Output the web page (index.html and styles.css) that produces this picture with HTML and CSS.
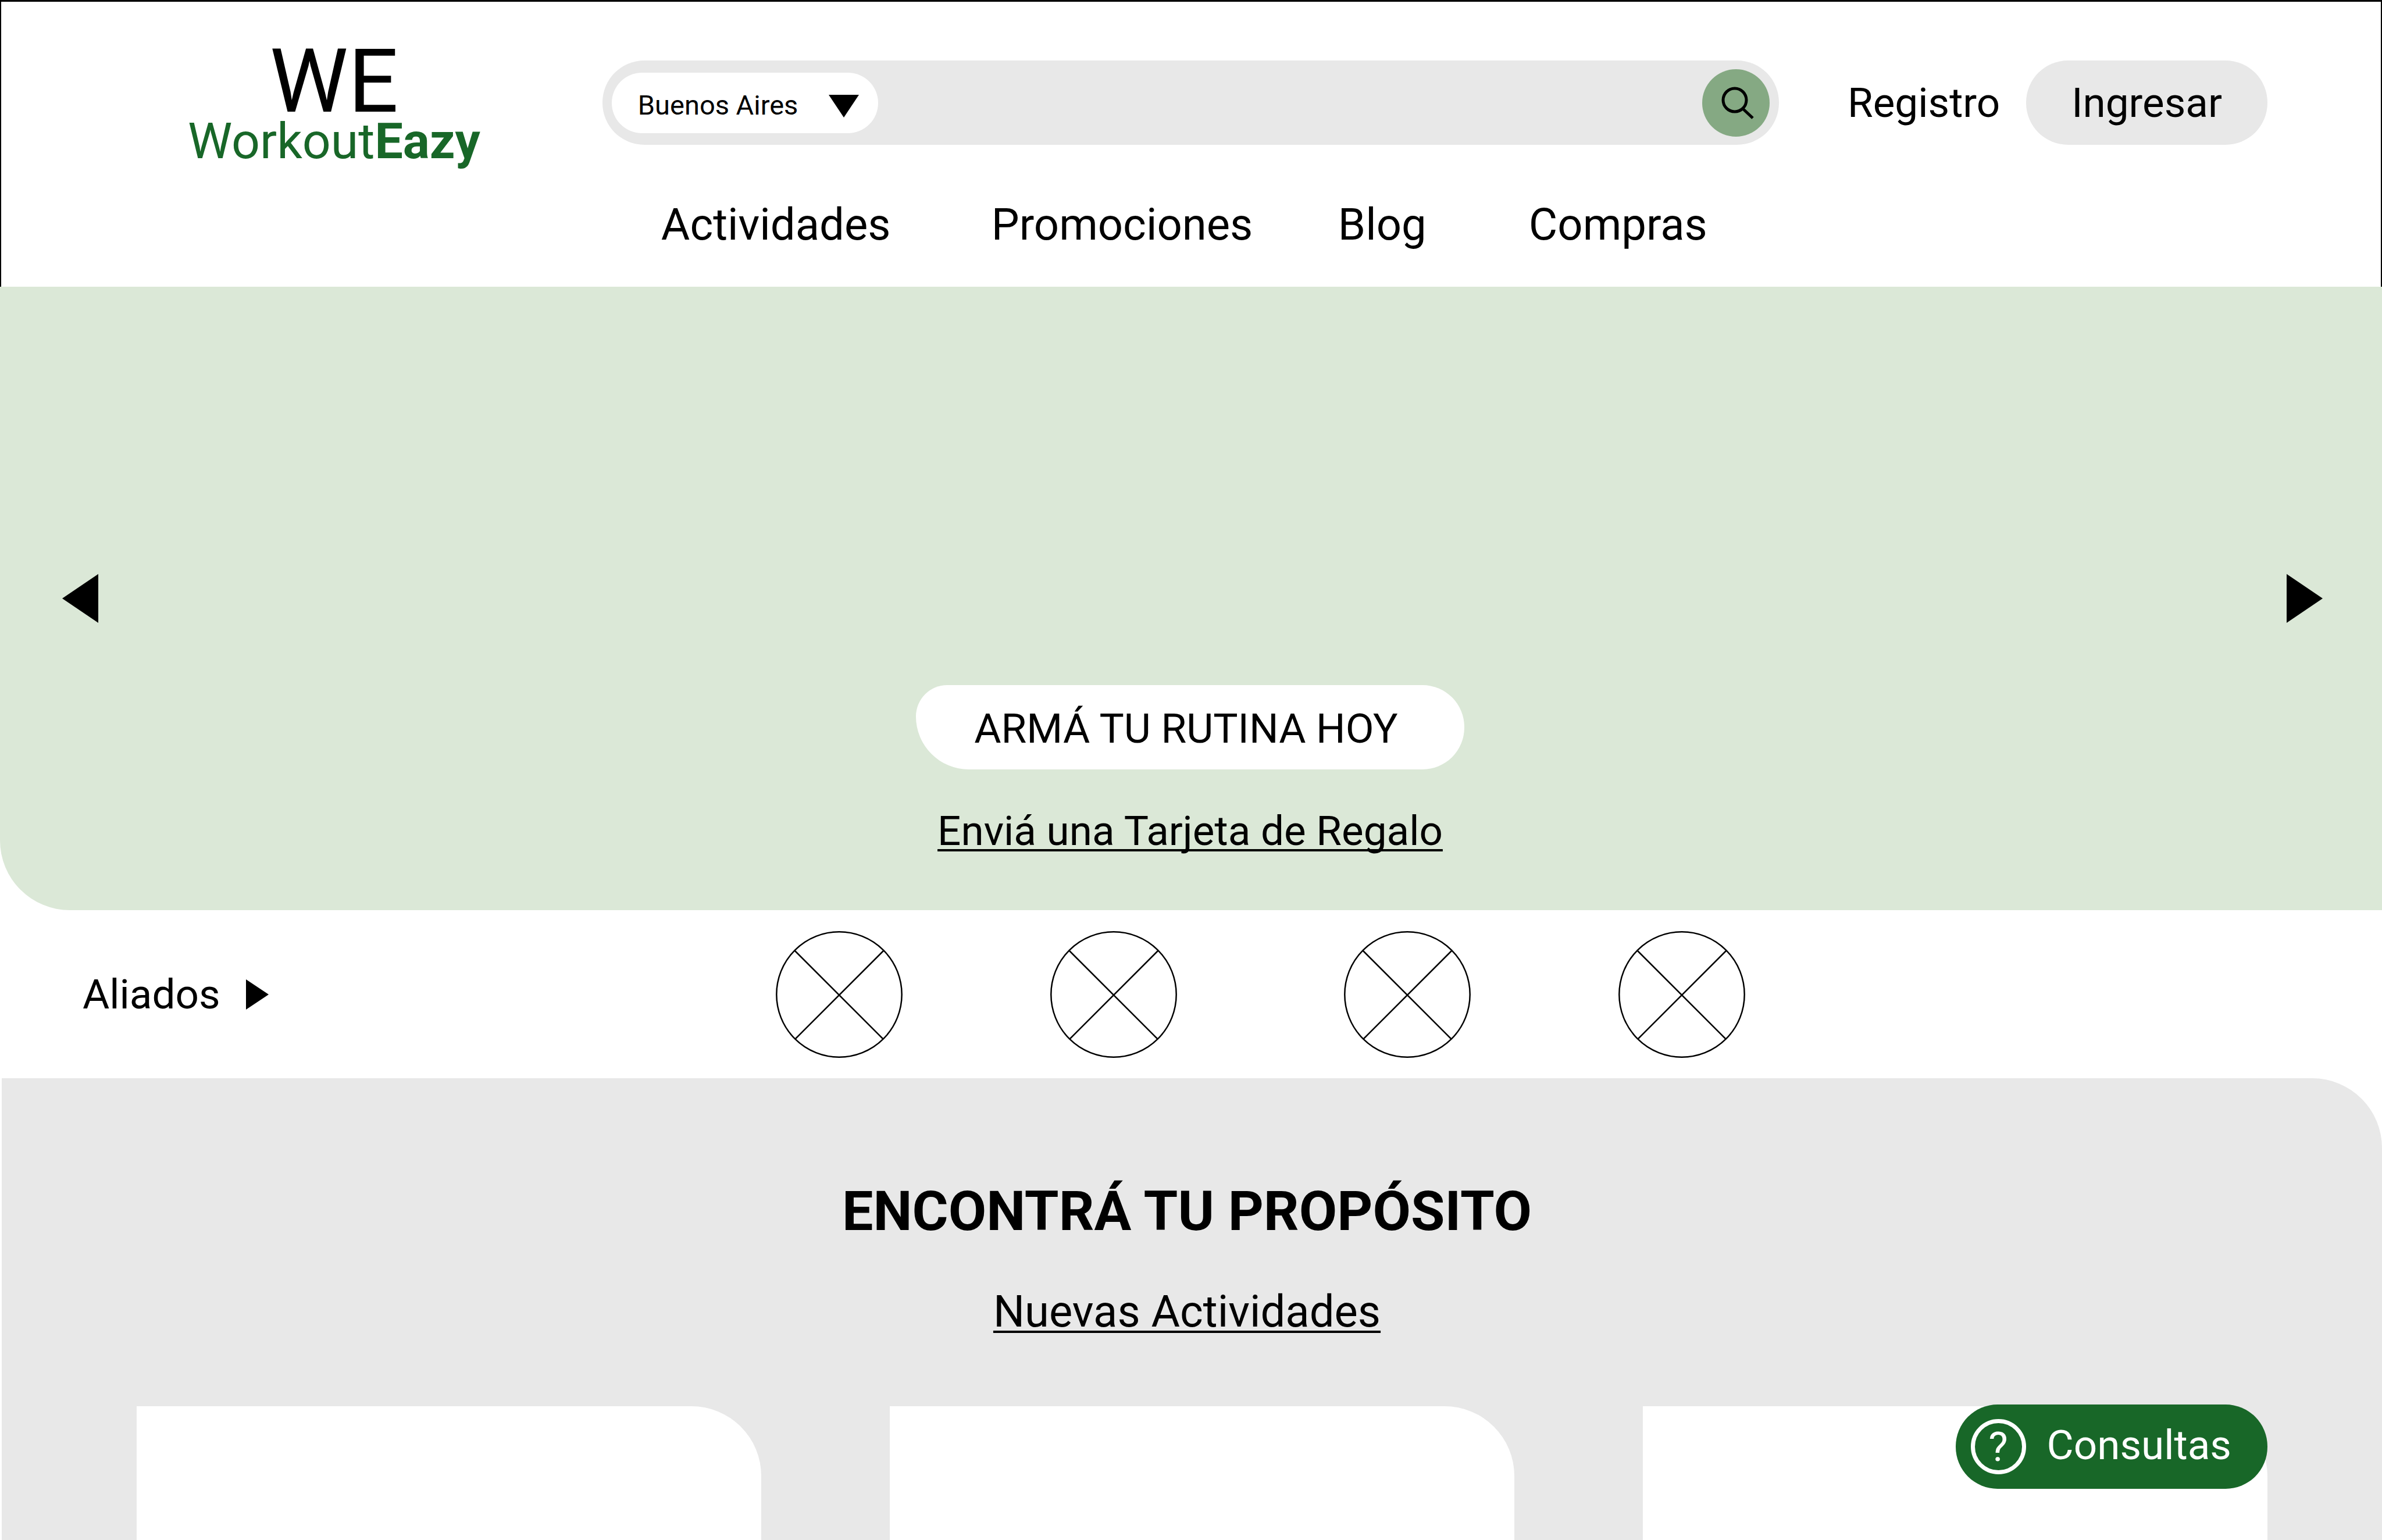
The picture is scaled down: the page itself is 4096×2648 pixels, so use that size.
FILE: index.html
```html
<!DOCTYPE html>
<html lang="es">
<head>
<meta charset="utf-8">
<meta name="viewport" content="width=device-width, initial-scale=1">
<title>WorkoutEazy</title>
<link rel="stylesheet" href="styles.css">
</head>
<body>
<header class="site-header">
  <a class="logo" href="#">
    <span class="logo-mark">WE</span>
    <span class="logo-name">Workout<strong>Eazy</strong></span>
  </a>
  <div class="header-main">
    <div class="header-top">
      <form class="search" role="search">
        <div class="location">
          <select class="location-select" aria-label="Ciudad">
            <option>Buenos Aires</option>
          </select>
          <svg class="location-arrow" viewBox="0 0 52 39" aria-hidden="true"><path d="M0 0h52L26 39z"/></svg>
        </div>
        <input class="search-input" type="search" aria-label="Buscar">
        <button class="search-button" type="submit" aria-label="Buscar">
          <svg class="search-icon" viewBox="0 0 116 116" aria-hidden="true">
            <circle cx="56" cy="53" r="20"/>
            <path d="M70 68l17 16"/>
          </svg>
        </button>
      </form>
      <a class="register" href="#">Registro</a>
      <button class="login" type="button">Ingresar</button>
    </div>
    <nav class="nav">
      <a href="#">Actividades</a>
      <a href="#">Promociones</a>
      <a href="#">Blog</a>
      <a href="#">Compras</a>
    </nav>
  </div>
</header>
<main class="content">
  <section class="hero">
    <button class="arrow" type="button" aria-label="Anterior">
      <svg class="arrow-icon" viewBox="0 0 62 84" aria-hidden="true"><path d="M62 0v84L0 42z"/></svg>
    </button>
    <div class="hero-actions">
      <button class="hero-button" type="button">ARMÁ TU RUTINA HOY</button>
      <a class="hero-link" href="#">Enviá una Tarjeta de Regalo</a>
    </div>
    <button class="arrow" type="button" aria-label="Siguiente">
      <svg class="arrow-icon" viewBox="0 0 62 84" aria-hidden="true"><path d="M0 0v84l62-42z"/></svg>
    </button>
  </section>
  <section class="allies">
    <a class="allies-title" href="#">
      Aliados
      <svg class="allies-arrow" viewBox="0 0 39 52" aria-hidden="true"><path d="M0 0v52l39-26z"/></svg>
    </a>
    <ul class="allies-list">
      <li><svg class="ally" viewBox="0 0 218 218" aria-hidden="true"><circle cx="109" cy="109" r="107.7"/><path d="M32 33L185 186M186 33L33 186"/></svg></li>
      <li><svg class="ally" viewBox="0 0 218 218" aria-hidden="true"><circle cx="109" cy="109" r="107.7"/><path d="M32 33L185 186M186 33L33 186"/></svg></li>
      <li><svg class="ally" viewBox="0 0 218 218" aria-hidden="true"><circle cx="109" cy="109" r="107.7"/><path d="M32 33L185 186M186 33L33 186"/></svg></li>
      <li><svg class="ally" viewBox="0 0 218 218" aria-hidden="true"><circle cx="109" cy="109" r="107.7"/><path d="M32 33L185 186M186 33L33 186"/></svg></li>
    </ul>
  </section>
  <section class="purpose">
    <div class="purpose-head">
      <h1 class="purpose-title">ENCONTRÁ TU PROPÓSITO</h1>
      <a class="purpose-link" href="#">Nuevas Actividades</a>
    </div>
    <div class="cards">
      <article class="card"></article>
      <article class="card"></article>
      <article class="card"></article>
    </div>
  </section>
</main>
<button class="help" type="button">
  <span class="help-icon" aria-hidden="true">?</span>
  <span class="help-label">Consultas</span>
</button>
</body>
</html>
```
FILE: styles.css
```css
:root {
  --green: #186728;
  --sage: #85a983;
  --mint: #dbe8d7;
  --grey: #e8e8e8;
}

* {
  box-sizing: border-box;
}

body {
  display: flex;
  flex-direction: column;
  min-height: 100vh;
  margin: 0;
  background: #fff;
  color: #000;
  font-family: Roboto, "Liberation Sans", sans-serif;
  font-size: 71px;
  line-height: 88px;
}

a {
  color: inherit;
  text-decoration: none;
}

button,
input,
select {
  margin: 0;
  padding: 0;
  border: 0;
  background: none;
  color: inherit;
  font: inherit;
}

svg {
  display: block;
}

/* Header */

.site-header {
  display: flex;
  align-items: flex-start;
  gap: 210px;
  padding: 0 195px 62px 321px;
  border: solid #000;
  border-width: 3px 2px 0;
}

.logo {
  display: flex;
  flex-direction: column;
  align-items: center;
  padding-top: 77px;
}

.logo-mark {
  font-size: 152px;
  line-height: 120px;
}

.logo-name {
  color: var(--green);
  font-size: 86px;
  line-height: 86px;
}

.header-main {
  flex: 1;
  padding-top: 101px;
}

.header-top {
  display: flex;
  align-items: center;
}

.search {
  display: flex;
  flex: 1;
  align-items: center;
  height: 145px;
  padding: 0 16px;
  border-radius: 72px;
  background: var(--grey);
}

.location {
  position: relative;
}

.location-select {
  display: block;
  width: 458px;
  height: 104px;
  padding: 8px 84px 0 45px;
  border-radius: 52px;
  background: #fff;
  font-size: 47px;
  line-height: 60px;
  appearance: none;
}

.location-arrow {
  position: absolute;
  top: 38px;
  right: 33px;
  width: 52px;
  height: 39px;
  pointer-events: none;
}

.search-input {
  flex: 1;
  height: 104px;
  padding: 0 32px;
  font-size: 47px;
}

.search-button {
  width: 116px;
  height: 116px;
  border-radius: 50%;
  background: var(--sage);
}

.search-icon {
  width: 116px;
  height: 116px;
  fill: none;
  stroke: #000;
  stroke-width: 5;
}

.register {
  margin: 0 45px 0 118px;
}

.login {
  height: 145px;
  padding: 0 78px;
  border-radius: 72px;
  background: var(--grey);
}

.nav {
  display: grid;
  grid-template-columns: 568px 596px 328px auto;
  padding: 92px 0 0 101px;
  font-size: 76px;
  line-height: 90px;
}

/* Main content */

.content {
  display: flex;
  flex: 1;
  flex-direction: column;
}

.hero {
  display: flex;
  align-items: center;
  justify-content: space-between;
  padding: 0 102px 0 107px;
  border-bottom-left-radius: 120px;
  background: var(--mint);
}

.arrow-icon {
  width: 62px;
  height: 84px;
}

.hero-actions {
  display: flex;
  flex-direction: column;
  align-items: center;
  gap: 62px;
  padding: 685px 8px 92px 0;
}

.hero-button {
  padding: 31px 114px 26px 100px;
  border-radius: 54px 72px 72px 91px;
  background: #fff;
}

.hero-link,
.purpose-link {
  text-decoration: underline;
  text-decoration-skip-ink: none;
  text-decoration-thickness: 4px;
  text-underline-offset: 7px;
}

.allies {
  display: flex;
  align-items: center;
  padding: 36px 142px 35px;
}

.allies-title {
  display: flex;
  align-items: center;
  gap: 44px;
}

.allies-arrow {
  width: 39px;
  height: 52px;
}

.allies-list {
  display: grid;
  grid-template-columns: 472px 505px 472px auto;
  margin: 0 0 0 872px;
  padding: 0;
  list-style: none;
}

.ally {
  width: 218px;
  height: 218px;
  fill: none;
  stroke: #000;
  stroke-width: 2.5;
}

.purpose {
  display: flex;
  flex: 1;
  flex-direction: column;
  gap: 118px;
  margin-left: 3px;
  padding: 174px 197px 0 232px;
  border-top-right-radius: 120px;
  background: var(--grey);
}

.purpose-head {
  display: flex;
  flex-direction: column;
  align-items: center;
  gap: 72px;
  padding-right: 52px;
}

.purpose-title {
  margin: 0;
  font-size: 95px;
  font-weight: 700;
  line-height: 110px;
}

.purpose-link {
  font-size: 76px;
  line-height: 90px;
}

.cards {
  display: grid;
  flex: 1;
  grid-template-columns: repeat(3, 1fr);
  gap: 221px;
  min-height: 230px;
}

.card {
  border-top-right-radius: 120px;
  background: #fff;
}

/* Floating help button */

.help {
  position: fixed;
  right: 197px;
  bottom: 88px;
  display: flex;
  align-items: center;
  gap: 36px;
  height: 145px;
  padding: 0 62px 0 26px;
  border-radius: 72px;
  background: var(--green);
  color: #fff;
}

.help-icon {
  width: 95px;
  height: 95px;
  border: 7px solid #fff;
  border-radius: 50%;
  line-height: 81px;
  text-align: center;
}

.help-label {
  padding-bottom: 6px;
}
```
